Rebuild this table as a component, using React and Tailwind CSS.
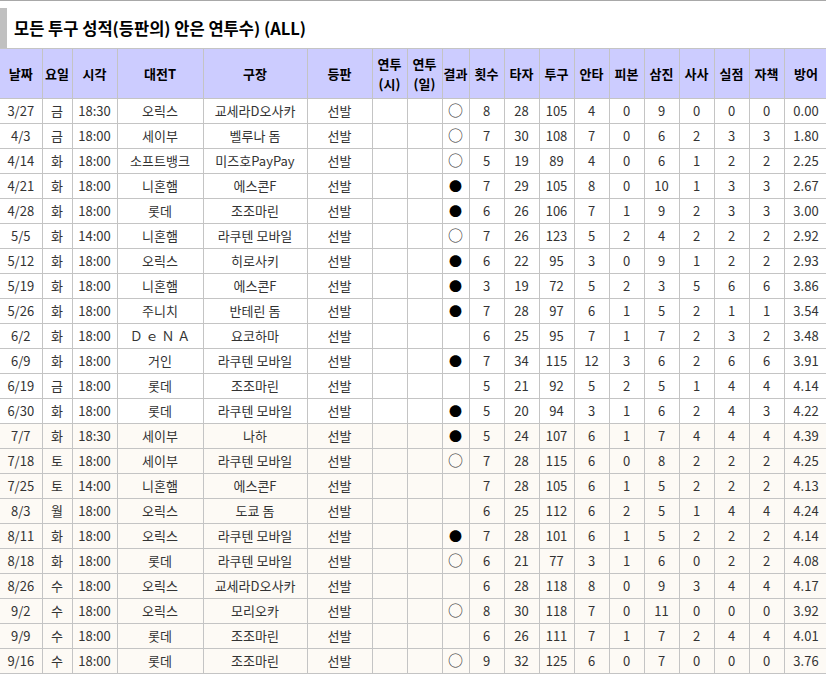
import React from 'react';

const cols = [
  'w-[42px]', 'w-[30px]', 'w-[45px]', 'w-[86px]', 'w-[104px]', 'w-[65px]', 'w-[35px]', 'w-[35px]', 'w-[27px]',
  'w-[35px]', 'w-[35px]', 'w-[35px]', 'w-[35px]', 'w-[35px]', 'w-[35px]', 'w-[35px]', 'w-[35px]', 'w-[35px]', 'w-[44px]',
];

const heads = ['날짜', '요일', '시각', '대전T', '구장', '등판', ['연투', '(시)'], ['연투', '(일)'], '결과', '횟수', '타자', '투구', '안타', '피본', '삼진', '사사', '실점', '자책', '방어'];

// date, day, time, team, park, result, ip, bf, pitches, h, hr, so, bb, r, er, era
const games = [
  ['3/27', '금', '18:30', '오릭스', '교세라D오사카', 'W', 8, 28, 105, 4, 0, 9, 0, 0, 0, '0.00'],
  ['4/3', '금', '18:00', '세이부', '벨루나 돔', 'W', 7, 30, 108, 7, 0, 6, 2, 3, 3, '1.80'],
  ['4/14', '화', '18:00', '소프트뱅크', '미즈호PayPay', 'W', 5, 19, 89, 4, 0, 6, 1, 2, 2, '2.25'],
  ['4/21', '화', '18:00', '니혼햄', '에스콘F', 'L', 7, 29, 105, 8, 0, 10, 1, 3, 3, '2.67'],
  ['4/28', '화', '18:00', '롯데', '조조마린', 'L', 6, 26, 106, 7, 1, 9, 2, 3, 3, '3.00'],
  ['5/5', '화', '14:00', '니혼햄', '라쿠텐 모바일', 'W', 7, 26, 123, 5, 2, 4, 2, 2, 2, '2.92'],
  ['5/12', '화', '18:00', '오릭스', '히로사키', 'L', 6, 22, 95, 3, 0, 9, 1, 2, 2, '2.93'],
  ['5/19', '화', '18:00', '니혼햄', '에스콘F', 'L', 3, 19, 72, 5, 2, 3, 5, 6, 6, '3.86'],
  ['5/26', '화', '18:00', '주니치', '반테린 돔', 'L', 7, 28, 97, 6, 1, 5, 2, 1, 1, '3.54'],
  ['6/2', '화', '18:00', 'Ｄ ｅ Ｎ Ａ', '요코하마', '', 6, 25, 95, 7, 1, 7, 2, 3, 2, '3.48'],
  ['6/9', '화', '18:00', '거인', '라쿠텐 모바일', 'L', 7, 34, 115, 12, 3, 6, 2, 6, 6, '3.91'],
  ['6/19', '금', '18:00', '롯데', '조조마린', '', 5, 21, 92, 5, 2, 5, 1, 4, 4, '4.14'],
  ['6/30', '화', '18:00', '롯데', '라쿠텐 모바일', 'L', 5, 20, 94, 3, 1, 6, 2, 4, 3, '4.22'],
  ['7/7', '화', '18:30', '세이부', '나하', 'L', 5, 24, 107, 6, 1, 7, 4, 4, 4, '4.39'],
  ['7/18', '토', '18:00', '세이부', '라쿠텐 모바일', 'W', 7, 28, 115, 6, 0, 8, 2, 2, 2, '4.25'],
  ['7/25', '토', '14:00', '니혼햄', '에스콘F', '', 7, 28, 105, 6, 1, 5, 2, 2, 2, '4.13'],
  ['8/3', '월', '18:00', '오릭스', '도쿄 돔', '', 6, 25, 112, 6, 2, 5, 1, 4, 4, '4.24'],
  ['8/11', '화', '18:00', '오릭스', '라쿠텐 모바일', 'L', 7, 28, 101, 6, 1, 5, 2, 2, 2, '4.14'],
  ['8/18', '화', '18:00', '롯데', '라쿠텐 모바일', 'W', 6, 21, 77, 3, 1, 6, 0, 2, 2, '4.08'],
  ['8/26', '수', '18:00', '오릭스', '교세라D오사카', '', 6, 28, 118, 8, 0, 9, 3, 4, 4, '4.17'],
  ['9/2', '수', '18:00', '오릭스', '모리오카', 'W', 8, 30, 118, 7, 0, 11, 0, 0, 0, '3.92'],
  ['9/9', '수', '18:00', '롯데', '조조마린', '', 6, 26, 111, 7, 1, 7, 2, 4, 4, '4.01'],
  ['9/16', '수', '18:00', '롯데', '조조마린', 'W', 9, 32, 125, 6, 0, 7, 0, 0, 0, '3.76'],
];

const Result = ({ r }) => {
  if (r === 'W') return <span className="text-[15px] leading-none text-[#333]">○</span>;
  if (r === 'L') return <span className="text-[13px] leading-none text-black">●</span>;
  return null;
};

const App = () => {
  return (
    <div
      className="w-[826px] h-[676px] overflow-hidden bg-white border-t border-[#a8a8a8] text-[#333]"
      style={{ fontFamily: '"Noto Sans CJK KR", "Noto Sans", sans-serif' }}
    >
      <div className="mt-[7px] h-[40px] flex items-center border-l-[7px] border-[#c0c0c0] pl-[7px]">
        <h1 className="text-[16.5px] font-bold text-black">모든 투구 성적(등판의) 안은 연투수) (ALL)</h1>
      </div>

      <table className="table-fixed border-collapse w-[828px] text-[13px] text-center">
        <colgroup>
          {cols.map((c, i) => <col key={i} className={c} />)}
        </colgroup>
        <thead>
          <tr className="bg-[#ccccff]">
            {heads.map((h, i) => (
              <th
                key={i}
                className={`h-[50px] border border-[#c4c4c4] font-bold text-black leading-[20px] p-0 ${i === 0 ? 'border-l-0' : ''}`}
              >
                {Array.isArray(h) ? <>{h[0]}<br />{h[1]}</> : h}
              </th>
            ))}
          </tr>
        </thead>
        <tbody>
          {games.map((g, idx) => {
            const [date, day, time, team, park, res, ...stats] = g;
            const bg = idx >= 13 ? 'bg-[#fdfaf5]' : 'bg-white';
            return (
              <tr key={idx} className={bg}>
                <td className="h-[25px] border border-[#c4c4c4] border-l-0 p-0">{date}</td>
                <td className="border border-[#c4c4c4] p-0">{day}</td>
                <td className="border border-[#c4c4c4] p-0">{time}</td>
                <td className="border border-[#c4c4c4] p-0 whitespace-nowrap">{team}</td>
                <td className="border border-[#c4c4c4] p-0 whitespace-nowrap">{park}</td>
                <td className="border border-[#c4c4c4] p-0">선발</td>
                <td className="border border-[#c4c4c4] p-0"></td>
                <td className="border border-[#c4c4c4] p-0"></td>
                <td className="border border-[#c4c4c4] p-0"><Result r={res} /></td>
                {stats.map((s, j) => (
                  <td key={j} className="border border-[#c4c4c4] p-0">{s}</td>
                ))}
              </tr>
            );
          })}
        </tbody>
      </table>
    </div>
  );
};

export default App;
